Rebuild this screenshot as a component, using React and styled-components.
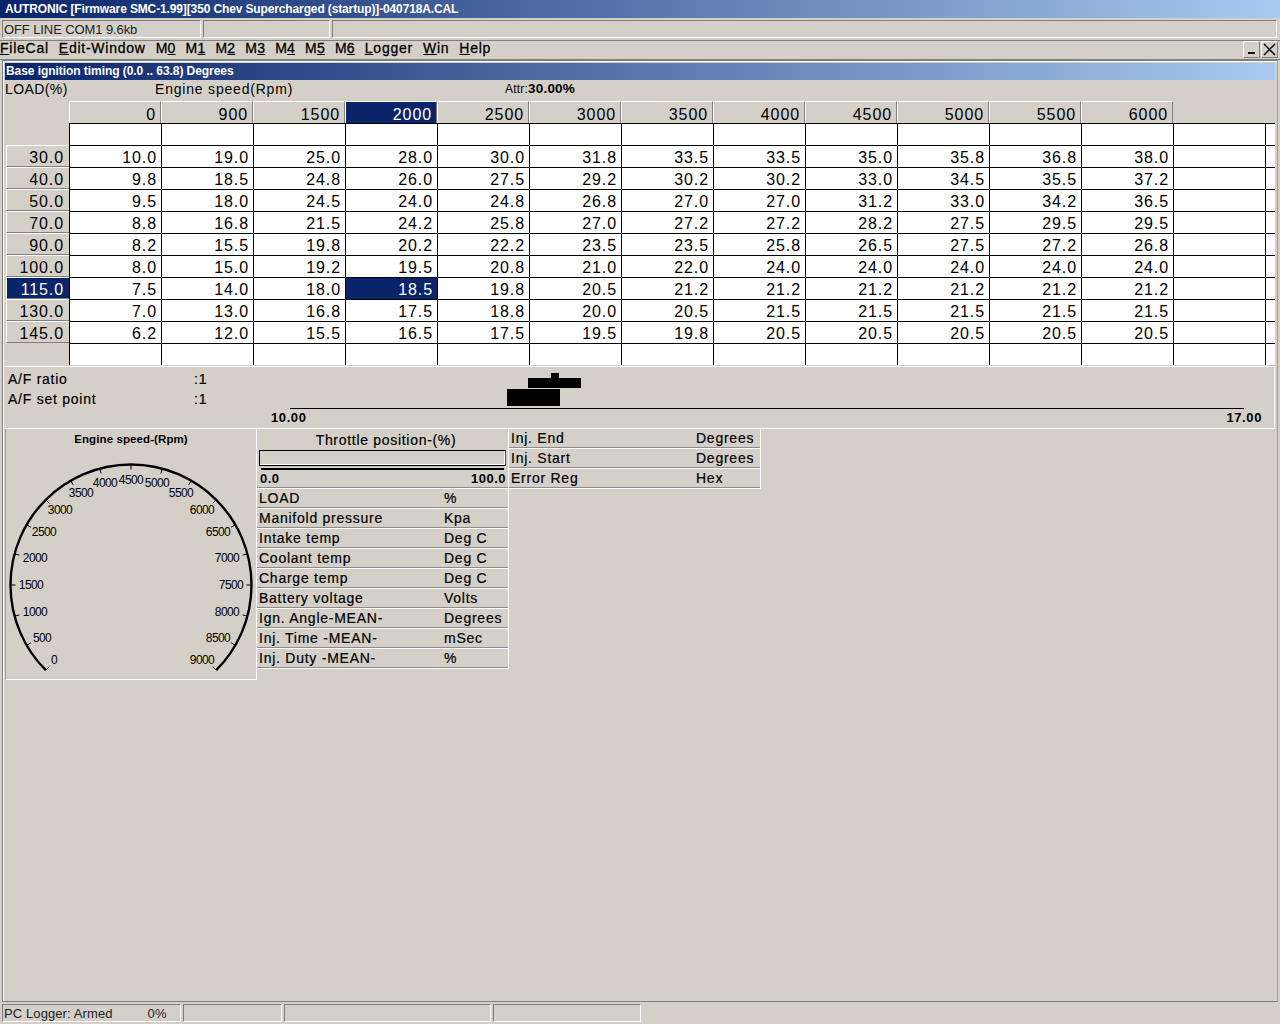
import React from "react";
import styled, { createGlobalStyle } from "styled-components";

const RPM = [0, 900, 1500, 2000, 2500, 3000, 3500, 4000, 4500, 5000, 5500, 6000];
const LOADS = [
  ["30.0", ["10.0", "19.0", "25.0", "28.0", "30.0", "31.8", "33.5", "33.5", "35.0", "35.8", "36.8", "38.0"]],
  ["40.0", ["9.8", "18.5", "24.8", "26.0", "27.5", "29.2", "30.2", "30.2", "33.0", "34.5", "35.5", "37.2"]],
  ["50.0", ["9.5", "18.0", "24.5", "24.0", "24.8", "26.8", "27.0", "27.0", "31.2", "33.0", "34.2", "36.5"]],
  ["70.0", ["8.8", "16.8", "21.5", "24.2", "25.8", "27.0", "27.2", "27.2", "28.2", "27.5", "29.5", "29.5"]],
  ["90.0", ["8.2", "15.5", "19.8", "20.2", "22.2", "23.5", "23.5", "25.8", "26.5", "27.5", "27.2", "26.8"]],
  ["100.0", ["8.0", "15.0", "19.2", "19.5", "20.8", "21.0", "22.0", "24.0", "24.0", "24.0", "24.0", "24.0"]],
  ["115.0", ["7.5", "14.0", "18.0", "18.5", "19.8", "20.5", "21.2", "21.2", "21.2", "21.2", "21.2", "21.2"]],
  ["130.0", ["7.0", "13.0", "16.8", "17.5", "18.8", "20.0", "20.5", "21.5", "21.5", "21.5", "21.5", "21.5"]],
  ["145.0", ["6.2", "12.0", "15.5", "16.5", "17.5", "19.5", "19.8", "20.5", "20.5", "20.5", "20.5", "20.5"]],
];
const SEL_ROW = 6;
const SEL_COL = 3;

const MENU = [
  ["F", "ileCal"], ["E", "dit-Window"], ["", "M", "0"], ["", "M", "1"], ["", "M", "2"], ["", "M", "3"],
  ["", "M", "4"], ["", "M", "5"], ["", "M", "6"], ["L", "ogger"], ["W", "in"], ["H", "elp"],
];

const SENSORS = [
  ["LOAD", "%"], ["Manifold pressure", "Kpa"], ["Intake temp", "Deg C"], ["Coolant temp", "Deg C"],
  ["Charge temp", "Deg C"], ["Battery voltage", "Volts"], ["Ign. Angle-MEAN-", "Degrees"],
  ["Inj. Time -MEAN-", "mSec"], ["Inj. Duty -MEAN-", "%"],
];
const INJ = [["Inj. End", "Degrees"], ["Inj. Start", "Degrees"], ["Error Reg", "Hex"]];

// label centres read off the dial, relative to the svg
const DIAL_LABELS = [
  [0, 48, 212], [500, 36, 190], [1000, 29, 164], [1500, 25, 137], [2000, 29, 110], [2500, 38, 84],
  [3000, 54, 62], [3500, 75, 45], [4000, 99, 35], [4500, 125, 32], [5000, 151, 35], [5500, 175, 45],
  [6000, 196, 62], [6500, 212, 84], [7000, 221, 110], [7500, 225, 137], [8000, 221, 164], [8500, 212, 190],
  [9000, 196, 212],
];

const Dial = () => {
  const cx = 125;
  const cy = 137;
  const r = 120.5;
  const pt = (deg, rad) => {
    const a = (deg * Math.PI) / 180;
    return [cx + rad * Math.cos(a), cy + rad * Math.sin(a)];
  };
  const [sx, sy] = pt(135, r);
  const [ex, ey] = pt(45, r);
  const ticks = Array.from({ length: 19 }, (_, i) => 135 + i * 15);
  return (
    <svg width="250" height="230" viewBox="0 0 250 230" style={{ display: "block" }}>
      <path d={`M${sx} ${sy} A${r} ${r} 0 1 1 ${ex} ${ey}`} fill="none" stroke="#000" strokeWidth="2.4" />
      {ticks.map((t) => {
        const [x1, y1] = pt(t, r);
        const [x2, y2] = pt(t, r - 5);
        return <line key={t} x1={x1} y1={y1} x2={x2} y2={y2} stroke="#000" strokeWidth="1" />;
      })}
      {DIAL_LABELS.map(([v, x, y]) => (
        <text key={v} x={x} y={y + 4} textAnchor="middle" fontFamily="'Liberation Sans', sans-serif" fontSize="12" letterSpacing="-0.6" fill="#000">
          {v}
        </text>
      ))}
    </svg>
  );
};

const AfChart = () => (
  <svg width="1008" height="42" viewBox="0 0 1008 42" style={{ display: "block" }}>
    <rect x="257" y="11" width="53" height="10" fill="#000" />
    <rect x="280" y="6" width="8" height="5" fill="#000" />
    <rect x="236" y="22" width="53" height="17" fill="#000" />
    <line x1="19" y1="41.5" x2="973" y2="41.5" stroke="#000" strokeWidth="1" />
  </svg>
);

export default function App() {
  return (
    <>
      <Global />
      <Screen>
        <AppTitle>AUTRONIC [Firmware SMC-1.99][350 Chev Supercharged (startup)]-040718A.CAL</AppTitle>
        <TopStatus>
          <Sunken $w={199}>OFF LINE COM1 9.6kb</Sunken>
          <Sunken $w={127} />
          <Sunken $grow />
        </TopStatus>
        <MenuBar>
          <MenuItems>
            {MENU.map((m, i) => (
              <MenuItem key={i} $tight={!m[0]}>
                {m[0] ? (
                  <>
                    <u>{m[0]}</u>
                    {m[1]}
                  </>
                ) : (
                  <>
                    {m[1]}
                    <u>{m[2]}</u>
                  </>
                )}
              </MenuItem>
            ))}
          </MenuItems>
          <WinButtons>
            <WinButton>
              <svg width="9" height="9" viewBox="0 0 9 9">
                <rect x="1" y="7" width="7" height="2" fill="#000" />
              </svg>
            </WinButton>
            <WinButton>
              <svg width="13" height="13" viewBox="0 0 13 13">
                <path d="M1 1 L12 12 M12 1 L1 12" stroke="#000" strokeWidth="1.5" fill="none" />
              </svg>
            </WinButton>
          </WinButtons>
        </MenuBar>

        <Child>
          <ChildTitle>Base ignition timing (0.0 .. 63.8) Degrees</ChildTitle>
          <AxisRow>
            <LoadLabel>LOAD(%)</LoadLabel>
            <SpeedLabel>Engine speed(Rpm)</SpeedLabel>
            <Attr>
              Attr:<b>30.00%</b>
            </Attr>
          </AxisRow>

          <MapGrid>
            <Stub />
            {RPM.map((v, c) => (
              <ColHead key={v} $sel={c === SEL_COL}>
                {v}
              </ColHead>
            ))}
            <Stub />
            <Stub />

            <Stub />
            {Array.from({ length: 14 }, (_, i) => (
              <Cell key={i} />
            ))}

            {LOADS.map(([load, vals], r) => (
              <React.Fragment key={load}>
                <RowHead $sel={r === SEL_ROW}>{load}</RowHead>
                {vals.map((v, c) => (
                  <Cell key={c} $sel={r === SEL_ROW && c === SEL_COL}>
                    {v}
                  </Cell>
                ))}
                <Cell />
                <Cell />
              </React.Fragment>
            ))}

            <Stub />
            {Array.from({ length: 14 }, (_, i) => (
              <Cell key={i} />
            ))}
          </MapGrid>

          <AfPanel>
            <AfLabels>
              <AfRow>
                <span>A/F ratio</span>
                <AfUnit>:1</AfUnit>
              </AfRow>
              <AfRow>
                <span>A/F set point</span>
                <AfUnit>:1</AfUnit>
              </AfRow>
            </AfLabels>
            <AfRight>
              <AfChart />
              <AfScale>
                <span>10.00</span>
                <span>17.00</span>
              </AfScale>
            </AfRight>
          </AfPanel>

          <Lower>
            <DialPanel>
              <DialTitle>Engine speed-(Rpm)</DialTitle>
              <Dial />
            </DialPanel>
            <InfoPanel>
              <ThrottleTitle>Throttle position-(%)</ThrottleTitle>
              <ThrottleBar />
              <ThrottleScale />
              <ThrottleLabels>
                <span>0.0</span>
                <span>100.0</span>
              </ThrottleLabels>
              {SENSORS.map(([a, b]) => (
                <InfoRow key={a}>
                  <span>{a}</span>
                  <span>{b}</span>
                </InfoRow>
              ))}
            </InfoPanel>
            <InfoPanel>
              {INJ.map(([a, b]) => (
                <InfoRow key={a}>
                  <span>{a}</span>
                  <span>{b}</span>
                </InfoRow>
              ))}
            </InfoPanel>
          </Lower>
        </Child>

        <BottomStatus>
          <BottomCell $w={179}>
            <span>PC Logger: Armed</span>
            <Pct>0%</Pct>
          </BottomCell>
          <BottomCell $w={99} />
          <BottomCell $w={207} />
          <BottomCell $w={148} />
        </BottomStatus>
      </Screen>
    </>
  );
}

/* ===== styles ===== */
const Global = createGlobalStyle`
  html, body { margin: 0; padding: 0; background: #d4d0c8; }
  * { box-sizing: border-box; }
`;

const Screen = styled.div`
  width: 1280px;
  height: 1024px;
  overflow: hidden;
  display: flex;
  flex-direction: column;
  background: #d4d0c8;
  color: #000;
  font-family: "Liberation Sans", Arial, sans-serif;
`;

const AppTitle = styled.div`
  height: 18px;
  flex: none;
  padding-left: 5px;
  line-height: 18px;
  font-size: 12px;
  font-weight: 700;
  letter-spacing: -0.13px;
  color: #fff;
  white-space: nowrap;
  background: linear-gradient(90deg, #0a246a 0%, #a6caf0 100%);
`;

const TopStatus = styled.div`
  height: 20px;
  flex: none;
  margin-top: 2px;
  padding: 0 3px 0 2px;
  display: flex;
  gap: 2px;
`;

const Sunken = styled.div`
  height: 18px;
  width: ${(p) => (p.$w ? `${p.$w}px` : "auto")};
  flex: ${(p) => (p.$grow ? "1" : "none")};
  padding-left: 1px;
  line-height: 17px;
  font-size: 13px;
  letter-spacing: -0.1px;
  color: #222;
  white-space: nowrap;
  border-top: 1px solid #808080;
  border-left: 1px solid #808080;
  border-bottom: 1px solid #fff;
  border-right: 1px solid #fff;
`;

const MenuBar = styled.div`
  height: 20px;
  flex: none;
  display: flex;
  justify-content: space-between;
  border-top: 1px solid #808080;
  border-bottom: 1px solid #808080;
`;

const MenuItems = styled.div`
  display: flex;
  gap: 10px;
  line-height: 15px;
  font-size: 14px;
  -webkit-text-stroke: 0.3px #000;
`;

const MenuItem = styled.span`
  letter-spacing: ${(p) => (p.$tight ? "0.2px" : "0.75px")};
  white-space: nowrap;
`;

const WinButtons = styled.div`
  display: flex;
  gap: 1px;
  padding-right: 2px;
`;

const WinButton = styled.div`
  width: 17px;
  height: 17px;
  display: flex;
  align-items: center;
  justify-content: center;
  border-top: 1px solid #fff;
  border-left: 1px solid #fff;
  border-right: 1px solid #808080;
  border-bottom: 1px solid #808080;
`;

const Child = styled.div`
  height: 942px;
  flex: none;
  margin: 0 2px;
  padding: 2px 2px 0;
  border: 1px solid #808080;
  border-right-color: #a0a0a0;
  box-shadow: inset 1px 1px 0 #fff;
`;

const ChildTitle = styled.div`
  height: 17px;
  padding-left: 1px;
  line-height: 16px;
  font-size: 12px;
  font-weight: 700;
  letter-spacing: -0.06px;
  color: #fff;
  white-space: nowrap;
  background: linear-gradient(90deg, #0a246a 0%, #a6caf0 100%);
`;

const AxisRow = styled.div`
  height: 21px;
  padding-bottom: 4px;
  display: flex;
  align-items: center;
  font-size: 14px;
  letter-spacing: 0.4px;
`;

const LoadLabel = styled.span`
  width: 150px;
  flex: none;
`;

const SpeedLabel = styled.span`
  width: 350px;
  flex: none;
  letter-spacing: 0.8px;
`;

const Attr = styled.span`
  font-size: 12px;
  letter-spacing: 0.2px;
  b {
    font-size: 13.5px;
    font-weight: 700;
    letter-spacing: 0.2px;
  }
`;

const MapGrid = styled.div`
  display: grid;
  grid-template-columns: 64px repeat(13, 92px) 10px;
  grid-auto-rows: 22px;
  font-size: 16px;
  letter-spacing: 0.9px;
`;

const Stub = styled.div``;

const ColHead = styled.div`
  padding: 2px 4px 0 0;
  text-align: right;
  line-height: 21px;
  color: ${(p) => (p.$sel ? "#fff" : "#000")};
  background: ${(p) => (p.$sel ? "#0a246a" : "transparent")};
  border-top: 1px solid #fff;
  border-left: 1px solid #fff;
  border-right: 1px solid #808080;
`;

const RowHead = styled.div`
  margin-left: 1px;
  padding: 2px 5px 0 0;
  text-align: right;
  line-height: 20px;
  color: ${(p) => (p.$sel ? "#fff" : "#000")};
  background: ${(p) => (p.$sel ? "#0a246a" : "transparent")};
  border-top: 1px solid #fff;
  border-left: 1px solid #fff;
  border-bottom: 1px solid #808080;
`;

const Cell = styled.div`
  padding: 1px 4px 0 0;
  text-align: right;
  line-height: 21px;
  color: ${(p) => (p.$sel ? "#fff" : "#000")};
  background: ${(p) => (p.$sel ? "#0a246a" : "#fff")};
  border-top: 1px solid #000;
  border-left: 1px solid #000;
`;

const AfPanel = styled.div`
  height: 63px;
  margin-top: 1px;
  display: flex;
  border-top: 1px solid #fff;
  border-bottom: 1px solid #fff;
  border-right: 1px solid #fff;
`;

const AfLabels = styled.div`
  width: 262px;
  flex: none;
  padding: 2px 0 0 3px;
`;

const AfRow = styled.div`
  height: 20px;
  display: flex;
  align-items: center;
  font-size: 14px;
  letter-spacing: 0.75px;
  -webkit-text-stroke: 0.2px #000;
  span:first-child {
    width: 186px;
  }
`;

const AfUnit = styled.span``;

const AfRight = styled.div`
  flex: 1;
  margin-left: 4px;
`;

const AfScale = styled.div`
  width: 991px;
  display: flex;
  justify-content: space-between;
  margin-top: 1px;
  font-size: 13px;
  font-weight: 700;
  letter-spacing: 0.6px;
`;

const Lower = styled.div`
  display: flex;
  align-items: flex-start;
`;

const DialPanel = styled.div`
  width: 252px;
  height: 251px;
  flex: none;
  border-right: 1px solid #fff;
  border-bottom: 1px solid #fff;
  border-left: 1px solid #a0a0a0;
`;

const DialTitle = styled.div`
  height: 19px;
  text-align: center;
  line-height: 21px;
  font-size: 11.5px;
  font-weight: 700;
  letter-spacing: 0.1px;
`;

const InfoPanel = styled.div`
  width: 252px;
  flex: none;
  border-right: 1px solid #fff;
`;

const InfoRow = styled.div`
  height: 20px;
  display: grid;
  grid-template-columns: 185px 1fr;
  padding: 0 0 2px 2px;
  align-items: center;
  font-size: 14px;
  letter-spacing: 0.75px;
  white-space: nowrap;
  -webkit-text-stroke: 0.2px #000;
  border-bottom: 1px solid #fff;
  box-shadow: inset 0 -1px 0 #8c8c8c;
`;

const ThrottleTitle = styled.div`
  height: 21px;
  padding-left: 7px;
  text-align: center;
  line-height: 23px;
  font-size: 14px;
  letter-spacing: 0.7px;
  -webkit-text-stroke: 0.2px #000;
`;

const ThrottleBar = styled.div`
  height: 16px;
  margin: 0 2px;
  border: 1px solid #000;
  border-right-color: #555;
  box-shadow: inset -1px -1px 0 #fff;
`;

const ThrottleScale = styled.div`
  height: 2px;
  margin: 2px 4px 0;
  background: #000;
`;

const ThrottleLabels = styled.div`
  height: 19px;
  display: flex;
  justify-content: space-between;
  align-items: center;
  padding: 0 2px 2px 3px;
  font-size: 13px;
  font-weight: 700;
  letter-spacing: 0.5px;
  border-bottom: 1px solid #fff;
  box-shadow: inset 0 -1px 0 #8c8c8c;
`;

const BottomStatus = styled.div`
  height: 20px;
  flex: none;
  margin-top: 2px;
  padding-left: 2px;
  display: flex;
  gap: 2px;
`;

const BottomCell = styled.div`
  width: ${(p) => p.$w}px;
  height: 18px;
  flex: none;
  display: flex;
  line-height: 17px;
  font-size: 13px;
  letter-spacing: 0.1px;
  color: #222;
  padding-left: 1px;
  white-space: nowrap;
  border-top: 1px solid #808080;
  border-left: 1px solid #808080;
  border-bottom: 1px solid #fff;
  border-right: 1px solid #fff;
`;

const Pct = styled.span`
  margin-left: 35px;
`;
